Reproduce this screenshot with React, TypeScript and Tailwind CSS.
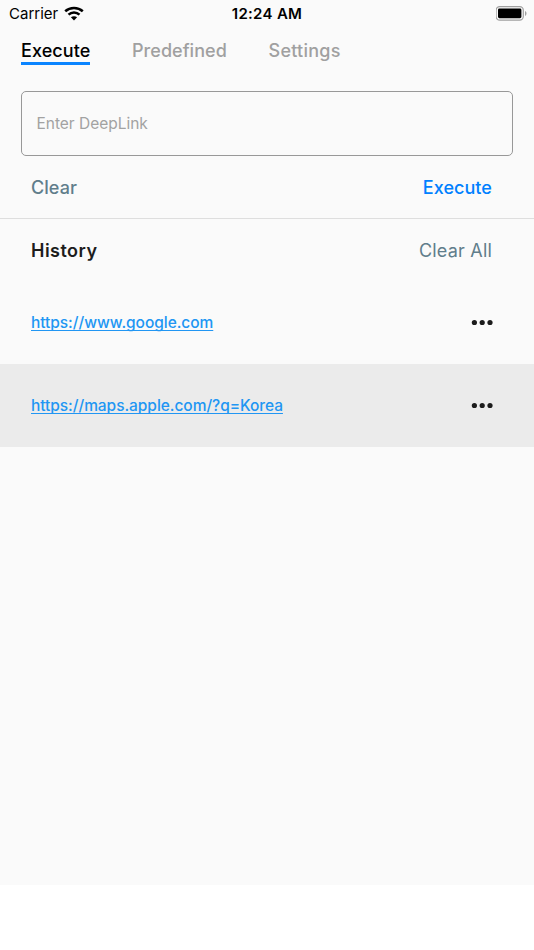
import { useState } from 'react';

const TABS = [
  { label: 'Execute', className: 'w-[69px] tracking-[0.1px]' },
  { label: 'Predefined', className: 'w-[94.5px] tracking-[0.05px]' },
  { label: 'Settings', className: 'w-[73px] tracking-[0.25px]' },
];

const HISTORY = ['https://www.google.com', 'https://maps.apple.com/?q=Korea'];

function WifiIcon() {
  return (
    <svg width="20" height="15" viewBox="0 0 20 15" fill="none" className="mb-[2px]">
      <path
        d="M1.2 5.2C6.1.8 13.9.8 18.8 5.2M4.5 8.6c3.1-2.9 7.9-2.9 11 0"
        stroke="black"
        strokeWidth="2.5"
      />
      <path d="M10 14.4 6.9 11.3c1.8-1.5 4.4-1.5 6.2 0Z" fill="black" />
    </svg>
  );
}

function BatteryIcon() {
  return (
    <svg width="32" height="15" viewBox="0 0 32 15" fill="none" className="mb-[2px]">
      <rect x="0.1" y="0.6" width="27.2" height="13.6" rx="3.6" stroke="#a0a0a0" strokeWidth="1.2" />
      <rect x="2" y="2.6" width="23.4" height="9.6" rx="1.4" fill="black" />
      <path d="M29 5.1c2 .8 2 4 0 4.8Z" fill="#a0a0a0" />
    </svg>
  );
}

function StatusBar() {
  return (
    <div className="grid h-7 grid-cols-3 items-center pl-[9px] pr-[6px] text-[15px] text-black">
      <div className="flex items-center gap-[6px]">
        <span className="w-[49px] whitespace-nowrap">Carrier</span>
        <WifiIcon />
      </div>
      <span className="pr-[3px] text-center font-semibold tracking-[0.3px]">12:24 AM</span>
      <div className="flex justify-end">
        <BatteryIcon />
      </div>
    </div>
  );
}

function MoreButton() {
  return (
    <button type="button" aria-label="More">
      <svg width="22" height="7" viewBox="0 0 22 7" fill="#1c1c1c">
        <circle cx="3.4" cy="3.5" r="2.6" />
        <circle cx="11.2" cy="3.5" r="2.6" />
        <circle cx="19" cy="3.5" r="2.6" />
      </svg>
    </button>
  );
}

export default function App() {
  const [tab, setTab] = useState('Execute');
  const [link, setLink] = useState('');

  return (
    <div className="h-[950px] w-[534px] overflow-hidden bg-white font-['Inter',sans-serif]">
      <div className="h-[885px] bg-[#fafafa]">
        <StatusBar />

        <nav className="flex h-[37px] items-start gap-[42px] pl-[21px] pt-[11px]">
          {TABS.map((t) => (
            <button
              key={t.label}
              type="button"
              onClick={() => setTab(t.label)}
              className={`h-[26px] whitespace-nowrap border-b-[3px] text-left text-[18px] font-medium leading-[23px] ${t.className} ${
                tab === t.label
                  ? 'border-[#0a84ff] text-black'
                  : 'border-transparent text-[#a0a0a0]'
              }`}
            >
              {t.label}
            </button>
          ))}
        </nav>

        <div className="px-[21px] pt-[26px]">
          <input
            value={link}
            onChange={(e) => setLink(e.target.value)}
            placeholder="Enter DeepLink"
            className="block h-[65px] w-full rounded-[5px] border border-[#989898] px-[14.5px] text-[15.5px] tracking-[-0.02px] outline-none placeholder:text-[#a2a2a2]"
          />
        </div>

        <div className="flex h-[63px] items-center justify-between border-b border-[#dedede] pl-[31px] pr-[42px] text-[18px] font-medium">
          <button type="button" className="tracking-[0.05px] text-[#607d8b]">
            Clear
          </button>
          <button type="button" className="tracking-[0.05px] text-[#0080ff]">
            Execute
          </button>
        </div>

        <div className="flex h-[62px] items-center justify-between pl-[31px] pr-[42px] text-[18px]">
          <h2 className="font-semibold tracking-[0.48px] text-[#1c1c1c]">History</h2>
          <button type="button" className="tracking-[0.2px] text-[#607d8b]">
            Clear All
          </button>
        </div>

        <ul>
          {HISTORY.map((url, i) => (
            <li
              key={url}
              className={`flex items-center justify-between pl-[31px] pr-[41px] ${
                i % 2 === 1 ? 'h-[82.5px] bg-[#ebebeb]' : 'h-[83px]'
              }`}
            >
              <a
                href={url}
                className="pt-px text-[15.5px] font-medium tracking-[-0.05px] text-[#2196f3] underline decoration-1 underline-offset-2 [text-decoration-skip-ink:none]"
              >
                {url}
              </a>
              <MoreButton />
            </li>
          ))}
        </ul>
      </div>
    </div>
  );
}
